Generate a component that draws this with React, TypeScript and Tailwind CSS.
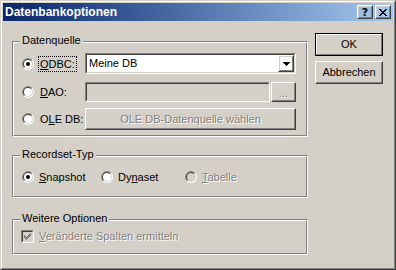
import React from "react";

const Radio = ({ checked = false, disabled = false }: { checked?: boolean; disabled?: boolean }) => (
  <svg width="12" height="12" viewBox="0 0 12 12" className="shrink-0">
    <circle cx="6" cy="6" r="6" fill="#ffffff" />
    <path d="M1.757 10.243A6 6 0 0 1 10.243 1.757Z" fill="#808080" />
    <circle cx="6" cy="6" r="5" fill="#D4D0C8" />
    <path d="M2.464 9.536A5 5 0 0 1 9.536 2.464Z" fill="#404040" />
    <circle cx="6" cy="6" r="4" fill={disabled ? "#D4D0C8" : "#ffffff"} />
    {checked && <circle cx="6" cy="6" r="2" fill="#000000" />}
  </svg>
);

const CheckBox = () => (
  <div className="w-[13px] h-[13px] shrink-0 border border-t-[#808080] border-l-[#808080] border-r-white border-b-white">
    <div className="w-full h-full border border-t-[#404040] border-l-[#404040] border-r-[#D4D0C8] border-b-[#D4D0C8] bg-[#D4D0C8]">
      <svg width="9" height="9" viewBox="0 0 9 9" shapeRendering="crispEdges">
        <rect x="1" y="3" width="1" height="3" fill="#808080" />
        <rect x="2" y="4" width="1" height="3" fill="#808080" />
        <rect x="3" y="5" width="1" height="3" fill="#808080" />
        <rect x="4" y="4" width="1" height="3" fill="#808080" />
        <rect x="5" y="3" width="1" height="3" fill="#808080" />
        <rect x="6" y="2" width="1" height="3" fill="#808080" />
        <rect x="7" y="1" width="1" height="3" fill="#808080" />
      </svg>
    </div>
  </div>
);

const Raised = ({ className = "", inner = "", children }: { className?: string; inner?: string; children?: React.ReactNode }) => (
  <div className={`border border-t-white border-l-white border-r-[#404040] border-b-[#404040] ${className}`}>
    <div className={`h-full border border-t-[#D4D0C8] border-l-[#D4D0C8] border-r-[#808080] border-b-[#808080] flex items-center justify-center ${inner}`}>
      {children}
    </div>
  </div>
);

const Sunken = ({ className = "", inner = "", children }: { className?: string; inner?: string; children?: React.ReactNode }) => (
  <div className={`border border-t-[#808080] border-l-[#808080] border-r-white border-b-white ${className}`}>
    <div className={`h-full border border-t-[#404040] border-l-[#404040] border-r-[#D4D0C8] border-b-[#D4D0C8] flex items-center ${inner}`}>
      {children}
    </div>
  </div>
);

const Group = ({ label, className = "", children }: { label: string; className?: string; children?: React.ReactNode }) => (
  <div className={`relative border border-t-[#808080] border-l-[#808080] border-b-white border-r-white ${className}`}>
    <div className="h-full border border-t-white border-l-white border-b-[#808080] border-r-[#808080]">{children}</div>
    <span className="absolute left-[7px] top-[-8px] bg-[#D4D0C8] px-[2px] leading-[13px]">{label}</span>
  </div>
);

const dis = "text-[#808080] [text-shadow:1px_1px_0_#ffffff]";

export default function App() {
  return (
    <div className="w-[396px] h-[270px] bg-[#D4D0C8] font-['Liberation_Sans',Arial,sans-serif] text-[11px] leading-[13px] text-black border border-t-[#D4D0C8] border-l-[#D4D0C8] border-r-[#404040] border-b-[#404040] select-none">
      <div className="h-full border border-t-white border-l-white border-r-[#808080] border-b-[#808080] p-px flex flex-col">
        {/* Title bar */}
        <div className="h-[18px] flex items-center bg-linear-to-r from-[#0A246A] to-[#A6CAF0] pl-[2px] pr-[2px]">
          <span className="flex-1 text-white font-bold text-[12px] leading-[18px]">Datenbankoptionen</span>
          <Raised className="w-[16px] h-[14px]" inner="">
            <span className="font-bold text-[11px] leading-[11px] font-['DejaVu_Sans',sans-serif]">?</span>
          </Raised>
          <Raised className="w-[16px] h-[14px] ml-[2px]">
            <svg width="8" height="7" viewBox="0 0 8 7" shapeRendering="crispEdges">
              <rect x="0" y="0" width="2" height="1" fill="#000" />
              <rect x="6" y="0" width="2" height="1" fill="#000" />
              <rect x="1" y="1" width="2" height="1" fill="#000" />
              <rect x="5" y="1" width="2" height="1" fill="#000" />
              <rect x="2" y="2" width="4" height="1" fill="#000" />
              <rect x="3" y="3" width="2" height="1" fill="#000" />
              <rect x="2" y="4" width="4" height="1" fill="#000" />
              <rect x="1" y="5" width="2" height="1" fill="#000" />
              <rect x="5" y="5" width="2" height="1" fill="#000" />
              <rect x="0" y="6" width="2" height="1" fill="#000" />
              <rect x="6" y="6" width="2" height="1" fill="#000" />
            </svg>
          </Raised>
        </div>

        {/* Body */}
        <div className="flex-1 flex pl-[9px]">
          <div className="w-[296px] flex flex-col pt-[20px]">
            <Group label="Datenquelle" className="h-[96px]">
              <div className="flex flex-col pt-[10px] pl-[8px]">
                <div className="h-[21px] flex items-center">
                  <div className="w-[63px] flex items-center">
                    <Radio checked />
                    <span className="ml-[4px] px-[1px] border border-dotted border-black leading-[14px]">
                      <u>O</u>DBC:
                    </span>
                  </div>
                  <Sunken className="w-[211px] h-[21px]" inner="bg-white">
                    <span className="flex-1 pl-[2px]">Meine DB</span>
                    <Raised className="w-[16px] h-[17px]">
                      <svg width="7" height="4" viewBox="0 0 7 4" shapeRendering="crispEdges">
                        <rect x="0" y="0" width="7" height="1" fill="#000" />
                        <rect x="1" y="1" width="5" height="1" fill="#000" />
                        <rect x="2" y="2" width="3" height="1" fill="#000" />
                        <rect x="3" y="3" width="1" height="1" fill="#000" />
                      </svg>
                    </Raised>
                  </Sunken>
                </div>
                <div className="h-[20px] mt-[8px] flex items-center">
                  <div className="w-[63px] flex items-center">
                    <Radio />
                    <span className="ml-[6px]">
                      <u>D</u>AO:
                    </span>
                  </div>
                  <Sunken className="w-[185px] h-[20px]" inner="bg-[#D4D0C8]" />
                  <Raised className="w-[25px] h-[20px] ml-px" inner="items-end pb-[3px]">
                    <span className={`${dis} leading-[8px]`}>...</span>
                  </Raised>
                </div>
                <div className="h-[22px] mt-[6px] flex items-center">
                  <div className="w-[63px] flex items-center">
                    <Radio />
                    <span className="ml-[6px]">
                      O<u>L</u>E DB:
                    </span>
                  </div>
                  <Raised className="w-[211px] h-[22px]">
                    <span className={dis}>OLE DB-Datenquelle wählen</span>
                  </Raised>
                </div>
              </div>
            </Group>

            <Group label="Recordset-Typ" className="h-[43px] mt-[18px]">
              <div className="flex items-center pt-[13px] pl-[8px] h-[27px]">
                <div className="w-[79px] flex items-center">
                  <Radio checked />
                  <span className="ml-[5px]">
                    <u>S</u>napshot
                  </span>
                </div>
                <div className="w-[84px] flex items-center">
                  <Radio />
                  <span className="ml-[5px]">
                    Dy<u>n</u>aset
                  </span>
                </div>
                <div className="flex items-center">
                  <Radio disabled />
                  <span className={`ml-[5px] ${dis}`}>
                    <u>T</u>abelle
                  </span>
                </div>
              </div>
            </Group>

            <Group label="Weitere Optionen" className="h-[36px] mt-[21px]">
              <div className="flex items-center pt-[9px] pl-[7px]">
                <CheckBox />
                <span className={`ml-[5px] ${dis}`}>
                  <u>V</u>eränderte Spalten ermitteln
                </span>
              </div>
            </Group>
          </div>

          <div className="ml-[7px] w-[68px] flex flex-col pt-[12px]">
            <div className="h-[23px] border border-black">
              <div className="h-full border border-t-white border-l-white border-r-[#808080] border-b-[#808080] flex items-center justify-center">
                OK
              </div>
            </div>
            <Raised className="h-[23px] mt-[5px]">Abbrechen</Raised>
          </div>
        </div>
      </div>
    </div>
  );
}
